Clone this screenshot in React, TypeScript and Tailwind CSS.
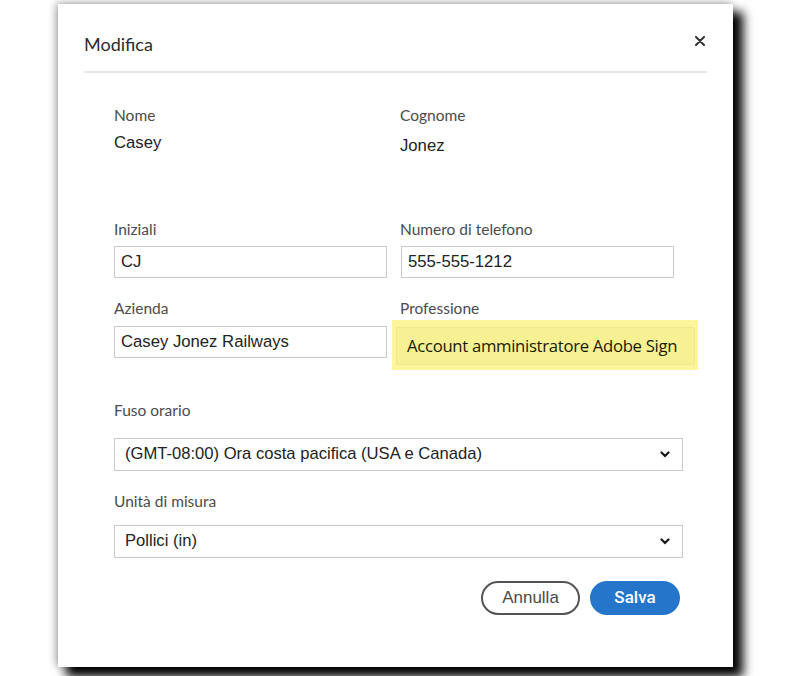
import React from "react";

const label = "text-[15.5px] leading-5 text-[#4b4b4b] font-['Lato',sans-serif]";
const field =
  "h-[32px] border border-[#c9c9c9] bg-white px-[6px] flex items-center text-[16.7px] text-[#222] font-['Liberation_Sans',Arial,sans-serif]";

function Chevron() {
  return (
    <svg width="10" height="7" viewBox="0 0 10 7" className="shrink-0">
      <path d="M1.5 1.5 L5 5 L8.5 1.5" fill="none" stroke="#1a1a1a" strokeWidth="2.2" strokeLinecap="round" />
    </svg>
  );
}

function Select({ value }: { value: string }) {
  return (
    <div className="h-[33px] border border-[#c9c9c9] bg-white pl-[10px] pr-[12px] flex items-center justify-between text-[16.6px] text-[#222] font-['Liberation_Sans',Arial,sans-serif]">
      <span>{value}</span>
      <Chevron />
    </div>
  );
}

export default function App() {
  return (
    <div className="w-[800px] min-h-[676px] bg-white pl-[58px] pt-[4px] overflow-hidden">
      <div className="w-[675px] h-[663px] bg-white flex flex-col shadow-[9px_9px_10px_1px_#000,-2px_-1px_8px_rgba(0,0,0,0.35)]">
        {/* Header */}
        <div className="px-[26px] pt-[28px]">
          <div className="flex items-center justify-between">
            <h1 className="text-[18px] leading-6 text-[#2c2c2c] font-['Lato',sans-serif]">Modifica</h1>
            <svg width="10" height="10" viewBox="0 0 10 10" className="mr-[2px] -mt-[6px]">
              <path d="M1 1 L9 9 M9 1 L1 9" stroke="#333" strokeWidth="2" strokeLinecap="round" />
            </svg>
          </div>
          <div className="mt-[15px] h-[2px] bg-[#e7e7e7]" />
        </div>

        {/* Body */}
        <div className="pl-[56px] pr-[50px] pt-[32px] flex flex-col">
          <div className="grid grid-cols-[286px_1fr]">
            <div>
              <div className={label}>Nome</div>
              <div className="mt-[7px] text-[16.7px] leading-[22px] text-[#222] font-['Liberation_Sans',Arial,sans-serif]">Casey</div>
            </div>
            <div>
              <div className={label}>Cognome</div>
              <div className="mt-[10px] text-[16.7px] leading-[22px] text-[#222] font-['Liberation_Sans',Arial,sans-serif]">Jonez</div>
            </div>
          </div>

          <div className="grid grid-cols-[286px_1fr] mt-[62px]">
            <div>
              <div className={label}>Iniziali</div>
              <div className={`${field} mt-[7px] w-[273px]`}>CJ</div>
            </div>
            <div>
              <div className={label}>Numero di telefono</div>
              <div className={`${field} mt-[7px] w-[273px] ml-px`}>555-555-1212</div>
            </div>
          </div>

          <div className="grid grid-cols-[286px_1fr] mt-[20px]">
            <div>
              <div className={label}>Azienda</div>
              <div className={`${field} mt-[8px] w-[273px] h-[31px]`}>Casey Jonez Railways</div>
            </div>
            <div>
              <div className={label}>Professione</div>
              <div className="mt-[2px] -ml-[8px] w-[306px] h-[50px] bg-[#fcf59b] pl-[4px] pr-[3px] pt-[7px] pb-[5px]">
                <div className="h-full border border-[#efe88e] bg-[#f8f193] rounded-[2px] pl-[10px] flex items-center text-[16.7px] text-[#1a1a02] font-['Open_Sans',sans-serif] tracking-[-0.3px]">
                  Account amministratore Adobe Sign
                </div>
              </div>
            </div>
          </div>

          <div className={`${label} mt-[30px]`}>Fuso orario</div>
          <div className="mt-[18px]">
            <Select value="(GMT-08:00) Ora costa pacifica (USA e Canada)" />
          </div>

          <div className={`${label} mt-[20px]`}>Unità di misura</div>
          <div className="mt-[14px]">
            <Select value="Pollici (in)" />
          </div>

          <div className="mt-[23px] flex justify-end gap-[10px] pr-[3px]">
            <button className="w-[99px] h-[34px] rounded-full border-2 border-[#545454] text-[17px] text-[#4a4a4a] font-['Liberation_Sans',Arial,sans-serif]">
              Annulla
            </button>
            <button className="w-[90px] h-[34px] rounded-full bg-[#2576ca] text-[17px] font-medium text-white font-['Roboto',sans-serif]">
              Salva
            </button>
          </div>
        </div>
      </div>
    </div>
  );
}
